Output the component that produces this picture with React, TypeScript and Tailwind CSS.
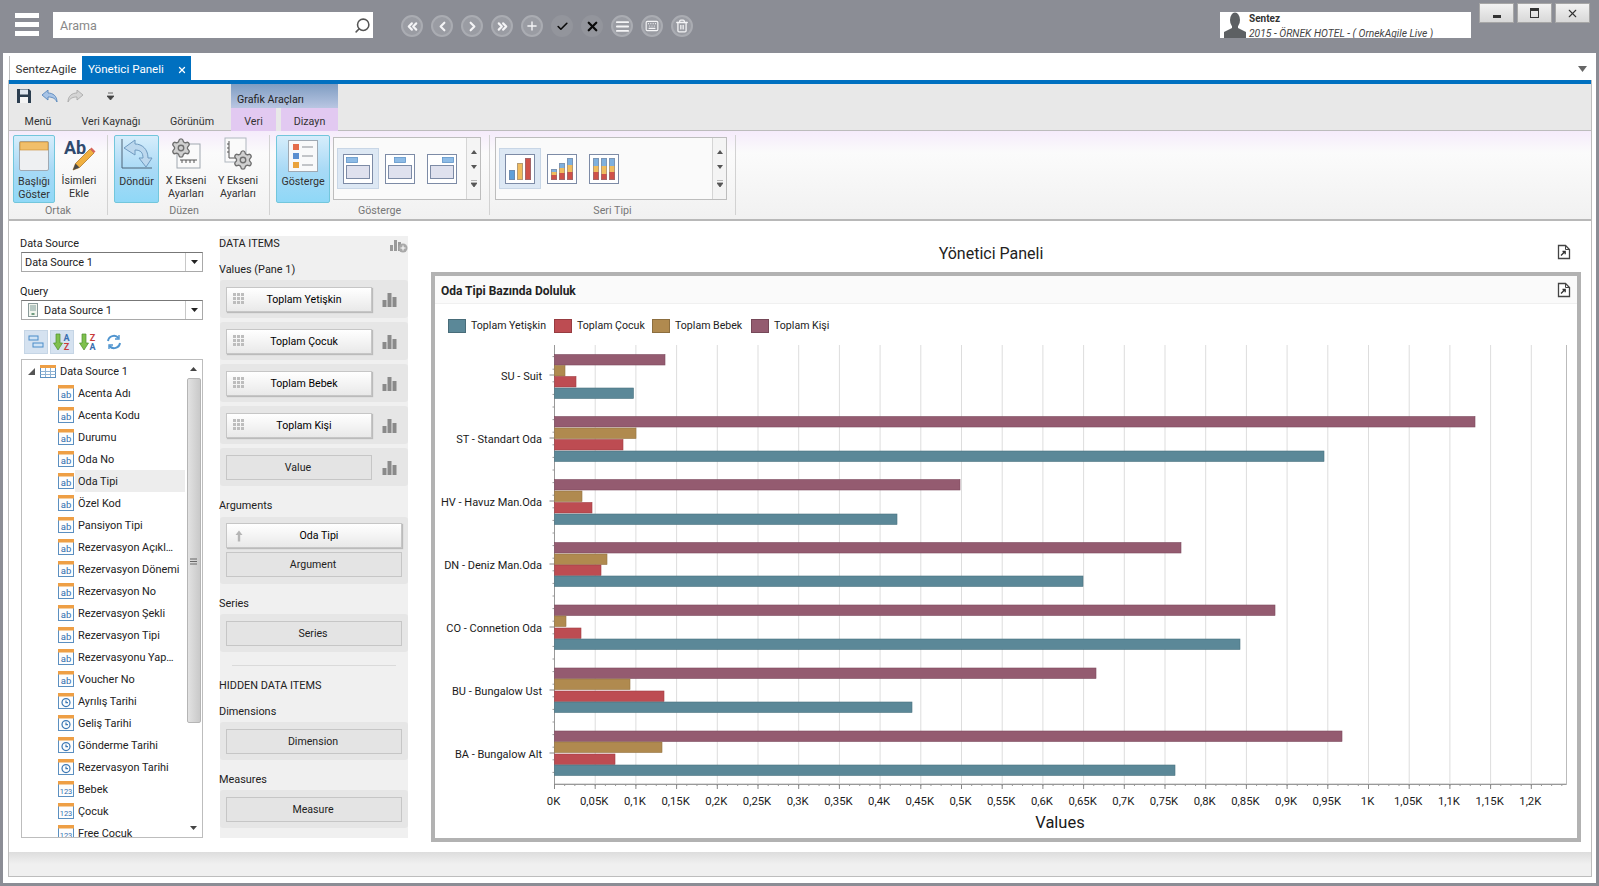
import React from "react";
import { ChevronsLeft, ChevronLeft, ChevronRight, ChevronsRight, Plus, Check, X, AlignJustify, Keyboard, Trash2, Search, Settings } from "lucide-react";

const FONT = 'Roboto, "Liberation Sans", Arial, sans-serif';

function AbIcon({ kind }: { kind: "ab" | "clock" | "num" }) {
  return (
    <svg width="16" height="16" viewBox="0 0 16 16" className="shrink-0">
      <rect x="0.5" y="0.5" width="15" height="15" fill="#fdfdfd" stroke="#5b8fc0" />
      <rect x="0" y="0" width="16" height="3.5" fill="#ee9f45" />
      {kind === "ab" && <text x="8" y="13" textAnchor="middle" fontSize="9.5" fill="#2f6db0" fontFamily={FONT}>ab</text>}
      {kind === "num" && <text x="8" y="13" textAnchor="middle" fontSize="7.5" fill="#2f6db0" fontFamily={FONT}>123</text>}
      {kind === "clock" && (
        <g fill="none" stroke="#3c78b4" strokeWidth="1.2">
          <circle cx="8" cy="9.6" r="4" />
          <path d="M8 7.5v2.2h2" />
        </g>
      )}
    </svg>
  );
}

function BarGlyph() {
  return (
    <svg width="15" height="15" viewBox="0 0 15 15" className="shrink-0">
      <rect x="0.5" y="8" width="4" height="7" fill="#8a8a8a" />
      <rect x="5.5" y="1" width="4" height="14" fill="#8a8a8a" />
      <rect x="10.5" y="5" width="4" height="10" fill="#8a8a8a" />
    </svg>
  );
}

function Grip() {
  return (
    <svg width="12" height="12" viewBox="0 0 12 12" className="shrink-0">
      {[0, 4, 8].map((y) => [0, 4, 8].map((x) => <rect key={`${x}${y}`} x={x} y={y} width="3" height="3" fill="#bdbdbd" />))}
    </svg>
  );
}

function DataButton({ label, filled, w, grip, arrow }: { label: string; filled?: boolean; w: string; grip?: boolean; arrow?: boolean }) {
  return (
    <div
      className={`${w} h-[25px] flex items-center shrink-0 border border-[#c6c6c6] text-[10.6px] ${filled ? "bg-gradient-to-b from-[#ffffff] to-[#e9e9e9] shadow-[1px_1px_1px_#bbbbbb] text-black" : "bg-[#e4e4e4] text-[#222222]"}`}
    >
      {grip && <span className="ml-[6px]"><Grip /></span>}
      {arrow && (
        <svg width="12" height="12" viewBox="0 0 12 12" className="ml-[6px] shrink-0">
          <path d="M6 0.5L9.5 5H7.2v6.5H4.8V5H2.5z" fill="#b5b5b5" />
        </svg>
      )}
      <span className={`flex-1 text-center pt-[1px] ${filled ? "pr-[8px]" : "pr-[2px]"}`}>{label}</span>
    </div>
  );
}

function ValueRow({ label, filled }: { label: string; filled?: boolean }) {
  return (
    <div className="h-[38px] bg-[#e6e6e6] rounded-[3px] flex items-center pl-[6px]">
      <DataButton label={label} filled={filled} grip={filled} w="w-[146px]" />
      <span className="ml-[10px]"><BarGlyph /></span>
    </div>
  );
}

function EmptySection({ label }: { label: string }) {
  return (
    <div className="h-[38px] mt-[4px] bg-[#e6e6e6] rounded-[3px] flex items-center px-[6px]">
      <DataButton label={label} w="w-[176px]" />
    </div>
  );
}

const TREE: [string, "ab" | "clock" | "num"][] = [
  ["Acenta Adı", "ab"], ["Acenta Kodu", "ab"], ["Durumu", "ab"], ["Oda No", "ab"], ["Oda Tipi", "ab"], ["Özel Kod", "ab"],
  ["Pansiyon Tipi", "ab"], ["Rezervasyon Açıkl…", "ab"], ["Rezervasyon Dönemi", "ab"], ["Rezervasyon No", "ab"],
  ["Rezervasyon Şekli", "ab"], ["Rezervasyon Tipi", "ab"], ["Rezervasyonu Yap…", "ab"], ["Voucher No", "ab"],
  ["Ayrılış Tarihi", "clock"], ["Geliş Tarihi", "clock"], ["Gönderme Tarihi", "clock"], ["Rezervasyon Tarihi", "clock"],
  ["Bebek", "num"], ["Çocuk", "num"], ["Free Çocuk", "num"],
];

function Combo({ text, icon }: { text: string; icon?: boolean }) {
  return (
    <div className="h-[20px] mt-[2px] border border-[#a9a9a9] border-t-[#777777] flex items-center bg-white">
      {icon && (
        <svg width="10" height="14" viewBox="0 0 10 14" className="ml-[6px] mr-[6px]">
          <rect x="0.5" y="0.5" width="9" height="13" fill="#f2f5ee" stroke="#8a9a9a" />
          <path d="M2 3h6M2 5h6M2 7h6" stroke="#7d9c98" />
          <rect x="3.5" y="10" width="3" height="2" fill="#6f9c80" />
        </svg>
      )}
      <span className={`flex-1 pt-[2px] ${icon ? "" : "pl-[3px]"}`}>{text}</span>
      <span className="w-[17px] h-full border-l border-[#c8c8c8] flex items-center justify-center">
        <svg width="7" height="4" viewBox="0 0 7 4"><path d="M0 0h7L3.5 4z" fill="#222222" /></svg>
      </span>
    </div>
  );
}

function SortIcon({ top, bottom }: { top: string; bottom: string }) {
  return (
    <svg width="18" height="18" viewBox="0 0 18 18">
      <path d="M3 1h4v9h2.5L5 17 0.5 10H3z" fill="#7fc04d" stroke="#4d8f2e" strokeWidth="0.7" />
      <text x="13.5" y="8" textAnchor="middle" fontSize="9" fontWeight="bold" fill={top === "A" ? "#3a6fb0" : "#c83a3a"} fontFamily={FONT}>{top}</text>
      <text x="13.5" y="17" textAnchor="middle" fontSize="9" fontWeight="bold" fill={bottom === "A" ? "#3a6fb0" : "#c83a3a"} fontFamily={FONT}>{bottom}</text>
    </svg>
  );
}

function LeftPanel() {
  return (
    <div className="w-[182px] ml-[12px] shrink-0 flex flex-col pt-[15px]">
      <div className="h-[14px] leading-[16px] -ml-[1px]">Data Source</div>
      <Combo text="Data Source 1" />
      <div className="h-[14px] leading-[16px] mt-[12px] -ml-[1px]">Query</div>
      <Combo text="Data Source 1" icon />
      <div className="h-[24px] mt-[10px] flex items-center pl-[3px]">
        <span className="w-[24px] h-[24px] bg-[#d5e2f0] border border-[#c5d5e5] flex items-center justify-center">
          <svg width="16" height="14" viewBox="0 0 16 14"><rect x="1" y="1" width="9" height="4" fill="#cfe3f5" stroke="#4a8cc8" /><rect x="5" y="8" width="10" height="4" fill="#cfe3f5" stroke="#4a8cc8" /></svg>
        </span>
        <span className="w-[24px] h-[24px] ml-[2px] bg-[#d5e2f0] border border-[#c5d5e5] flex items-center justify-center"><SortIcon top="A" bottom="Z" /></span>
        <span className="w-[24px] h-[24px] ml-[2px] flex items-center justify-center"><SortIcon top="Z" bottom="A" /></span>
        <span className="w-[24px] h-[24px] ml-[2px] flex items-center justify-center">
          <svg width="16" height="16" viewBox="0 0 16 16" fill="none" stroke="#4f94cf" strokeWidth="2"><path d="M2 7a6 6 0 0 1 10.5-3M14 9A6 6 0 0 1 3.5 12" /><path d="M13 1v4H9M3 15v-4h4" strokeWidth="1.4" /></svg>
        </span>
      </div>
      <div className="h-[479px] mt-[5px] border border-[#bdbdbd] flex overflow-hidden">
        <div className="flex-1 min-w-0 flex flex-col">
          <div className="h-[22px] shrink-0 flex items-center whitespace-nowrap">
            <svg width="7" height="7" viewBox="0 0 7 7" className="ml-[6px]"><path d="M7 0v7H0z" fill="#555555" /></svg>
            <svg width="16" height="13" viewBox="0 0 16 13" className="ml-[5px]">
              <rect x="0.5" y="0.5" width="15" height="12" fill="#fff" stroke="#5b8fc0" />
              <rect x="0" y="0" width="16" height="3" fill="#ee9f45" />
              <path d="M0.5 6.5h15M0.5 9.5h15M5.5 3v9M10.5 3v9" stroke="#8fb3d4" />
            </svg>
            <span className="ml-[4px] pt-[2px]">Data Source 1</span>
          </div>
          {TREE.map(([t, k]) => (
            <div key={t} className="h-[22px] shrink-0 flex items-center pl-[36px] whitespace-nowrap">
              <AbIcon kind={k} />
              <span className={`ml-[1px] pl-[3px] pt-[2px] flex-1 h-full flex items-center ${t === "Oda Tipi" ? "bg-[#ededed]" : ""}`}>{t}</span>
            </div>
          ))}
        </div>
        <div className="w-[17px] shrink-0 flex flex-col items-center bg-white">
          <svg width="7" height="4" viewBox="0 0 7 4" className="mt-[7px] mb-[7px]"><path d="M3.5 0L7 4H0z" fill="#444444" /></svg>
          <div className="w-[14px] h-[345px] bg-gradient-to-r from-[#e2e2e2] to-[#c9c9c9] border border-[#b5b5b5] rounded-[2px] flex items-center justify-center pt-[22px]">
            <svg width="7" height="7" viewBox="0 0 7 7"><path d="M0 1h7M0 3.5h7M0 6h7" stroke="#666666" /></svg>
          </div>
          <div className="flex-1" />
          <svg width="7" height="4" viewBox="0 0 7 4" className="mb-[7px]"><path d="M0 0h7L3.5 4z" fill="#444444" /></svg>
        </div>
      </div>
    </div>
  );
}

function SectionLabel({ children }: { children: React.ReactNode }) {
  return <div className="h-[14px] leading-[16px] mt-[12px] -ml-[1px]">{children}</div>;
}

function MiddlePanel() {
  return (
    <div className="w-[188px] ml-[17px] mt-[15px] h-[602px] shrink-0 bg-[#f0f0f0] flex flex-col">
      <div className="h-[14px] leading-[16px] mt-0 flex justify-between">
        <span className="-ml-[1px]">DATA ITEMS</span>
        <svg width="18" height="14" viewBox="0 0 18 14" className="mt-[3px]">
          <rect x="0" y="6" width="3" height="6" fill="#9a9a9a" /><rect x="4" y="1" width="3" height="11" fill="#9a9a9a" /><rect x="8" y="3" width="3" height="9" fill="#9a9a9a" />
          <circle cx="13" cy="9" r="4.5" fill="#a8a8a8" /><path d="M13 6.5v5M10.5 9h5" stroke="#fff" />
        </svg>
      </div>
      <SectionLabel>Values (Pane 1)</SectionLabel>
      <div className="mt-[4px] flex flex-col gap-[4px]">
        <ValueRow label="Toplam Yetişkin" filled />
        <ValueRow label="Toplam Çocuk" filled />
        <ValueRow label="Toplam Bebek" filled />
        <ValueRow label="Toplam Kişi" filled />
        <ValueRow label="Value" />
      </div>
      <SectionLabel>Arguments</SectionLabel>
      <div className="h-[67px] mt-[5px] bg-[#e6e6e6] rounded-[3px] flex flex-col gap-[4px] px-[6px] pt-[6px]">
        <DataButton label="Oda Tipi" filled arrow w="w-[176px]" />
        <DataButton label="Argument" w="w-[176px]" />
      </div>
      <SectionLabel>Series</SectionLabel>
      <EmptySection label="Series" />
      <div className="h-px mt-[13px] mx-[12px] bg-[#dadada]" />
      <SectionLabel>HIDDEN DATA ITEMS</SectionLabel>
      <SectionLabel>Dimensions</SectionLabel>
      <EmptySection label="Dimension" />
      <SectionLabel>Measures</SectionLabel>
      <EmptySection label="Measure" />
    </div>
  );
}

function ExportIcon() {
  return (
    <svg width="16" height="16" viewBox="0 0 16 16" fill="none" className="shrink-0">
      <path d="M2.5 1.5h7l4 4v9h-11z" fill="#fff" stroke="#444444" strokeWidth="1.3" />
      <path d="M9.5 1.5v4h4" stroke="#444444" />
      <path d="M5 11.5l4-4M6.5 7.5H9.2v2.7" stroke="#333333" strokeWidth="1.3" />
    </svg>
  );
}

type Cat = { n: string; y: number; p: number; t: number; r: number; b: number; ys: number[] };
const CATS: Cat[] = [
  { n: "SU - Suit", y: 376, p: 665, t: 565, r: 576, b: 633.5, ys: [355.5, 366.5, 377.5, 389] },
  { n: "ST - Standart Oda", y: 439, p: 1475, t: 636, r: 623, b: 1324, ys: [417.5, 429, 440.5, 452] },
  { n: "HV - Havuz Man.Oda", y: 502, p: 960, t: 582, r: 592, b: 897, ys: [480.5, 492, 503.5, 515] },
  { n: "DN - Deniz Man.Oda", y: 565, p: 1181, t: 607, r: 601, b: 1083, ys: [543.5, 555, 566, 577] },
  { n: "CO - Connetion Oda", y: 628, p: 1275, t: 566, r: 581, b: 1240, ys: [606, 617, 629, 640] },
  { n: "BU - Bungalow Ust", y: 691, p: 1096, t: 630, r: 664, b: 912, ys: [669, 680, 692, 703] },
  { n: "BA - Bungalow Alt", y: 754, p: 1342, t: 662, r: 615, b: 1175, ys: [732, 743, 755, 766] },
];
const COL = { p: "#945b70", t: "#b08a4f", r: "#bd4c52", b: "#5b8898" };
const LEG: [string, string, string][] = [
  ["Toplam Yetişkin", COL.b, "w-[106px]"],
  ["Toplam Çocuk", COL.r, "w-[98px]"],
  ["Toplam Bebek", COL.t, "w-[99px]"],
  ["Toplam Kişi", COL.p, "w-[90px]"],
];
const X0 = 554.5;
const STEP = 40.7;
const TL = ["0K","0,05K","0,1K","0,15K","0,2K","0,25K","0,3K","0,35K","0,4K","0,45K","0,5K","0,55K","0,6K","0,65K","0,7K","0,75K","0,8K","0,85K","0,9K","0,95K","1K","1,05K","1,1K","1,15K","1,2K"];

function Plot() {
  const fs = { fontFamily: FONT, fill: "#1a1a1a" } as const;
  const yticks: number[] = [];
  for (let y = 345; y < 785; y += 12.6) yticks.push(y);
  const xticks: number[] = [];
  for (let x = X0; x < 1566; x += STEP / 4) xticks.push(x);
  return (
    <svg width="1142" height="493" viewBox="435 346 1142 493" className="block">
      <rect x={X0} y={345.5} width={1566.5 - X0} height={439.5} fill="#fff" stroke="#bbbbbb" />
      {TL.map((_, i) => i > 0 && <line key={i} x1={X0 + i * STEP} x2={X0 + i * STEP} y1={346} y2={785} stroke="#dddddd" />)}
      <line x1={X0} x2={X0} y1={345} y2={785} stroke="#999999" />
      <line x1={X0} x2={1566.5} y1={785.5} y2={785.5} stroke="#999999" />
      {yticks.map((y) => <line key={y} x1={X0 - 2} x2={X0} y1={y} y2={y} stroke="#999999" />)}
      {xticks.map((x) => <line key={x} x1={x} x2={x} y1={785} y2={787} stroke="#999999" />)}
      {TL.map((l, i) => (
        <g key={l}>
          <line x1={X0 + i * STEP} x2={X0 + i * STEP} y1={785} y2={790} stroke="#888888" />
          <text x={X0 + i * STEP - 1} y={806} textAnchor="middle" fontSize="11.3" {...fs}>{l}</text>
        </g>
      ))}
      {CATS.map((c) => (
        <g key={c.n}>
          <line x1={X0 - 5} x2={X0} y1={c.y} y2={c.y} stroke="#888888" />
          <text x={542} y={c.y + 5} textAnchor="end" fontSize="11" {...fs}>{c.n}</text>
          <rect x={X0} y={c.ys[0]} width={c.p - X0} height={10.5} fill={COL.p} stroke="#7d4c5f" strokeWidth="0.6" />
          <rect x={X0} y={c.ys[1]} width={c.t - X0} height={10.5} fill={COL.t} stroke="#957441" strokeWidth="0.6" />
          <rect x={X0} y={c.ys[2]} width={c.r - X0} height={10.5} fill={COL.r} stroke="#a03f45" strokeWidth="0.6" />
          <rect x={X0} y={c.ys[3]} width={c.b - X0} height={10.5} fill={COL.b} stroke="#4c7381" strokeWidth="0.6" />
        </g>
      ))}
      <text x={1060} y={829} textAnchor="middle" fontFamily={FONT} fontSize="16.5" fill="#1a1a1a">Values</text>
    </svg>
  );
}

function RightPanel() {
  return (
    <div className="w-[1150px] ml-[23px] shrink-0 flex flex-col">
      <div className="h-[51px] flex items-center pt-[11px] text-[16px]">
        <div className="w-[1120px] text-center text-[#222222] pt-[4px]">Yönetici Paneli</div>
        <span className="ml-[5px]"><ExportIcon /></span>
      </div>
      <div className="h-[570px] border-[4px] border-[#b2b2b2] flex flex-col bg-white">
        <div className="h-[28px] shrink-0 bg-[#fafafa] border-b border-[#f0f0f0] flex items-center pl-[6px] pr-[5px] justify-between">
          <span className="font-bold text-[12px] text-[#222222] pt-[2px]">Oda Tipi Bazında Doluluk</span>
          <ExportIcon />
        </div>
        <div className="h-[41px] shrink-0 flex items-center pl-[13px] pt-[3px] text-[10.6px]">
          {LEG.map(([l, c, w]) => (
            <div key={l} className={`${w} flex items-center shrink-0`}>
              <span className="w-[18px] h-[14px] border border-black/20 shrink-0" style={{ background: c }} />
              <span className="ml-[5px] whitespace-nowrap">{l}</span>
            </div>
          ))}
        </div>
        <Plot />
      </div>
    </div>
  );
}

function NavBtn({ children, dark }: { children: React.ReactNode; dark?: boolean }) {
  return (
    <span className={`w-[22px] h-[22px] rounded-full flex items-center justify-center ${dark ? "bg-[#93959c] text-[#0a0a0a]" : "bg-[#9a9ca3] border-2 border-[#aaacb2] text-[#f4f4f6]"}`}>
      {children}
    </span>
  );
}

function TopBar() {
  const s = { size: 15, strokeWidth: 3.4 };
  return (
    <div className="h-[53px] shrink-0 flex items-start pl-[15px]">
      <div className="w-[24px] mt-[13px] flex flex-col gap-[4px]">
        <div className="h-[5px] bg-white" /><div className="h-[5px] bg-white" /><div className="h-[5px] bg-white" />
      </div>
      <div className="w-[320px] h-[26px] mt-[12px] ml-[14px] bg-white flex items-center justify-between pl-[7px] pr-[2px] text-[12.5px] text-[#888888]">
        <span className="pt-[3px]">Arama</span>
        <Search size={17} strokeWidth={2.2} className="-scale-x-100 text-[#555555]" />
      </div>
      <div className="flex gap-[8px] ml-[28px] mt-[15px]">
        <NavBtn><ChevronsLeft {...s} /></NavBtn>
        <NavBtn><ChevronLeft {...s} /></NavBtn>
        <NavBtn><ChevronRight {...s} /></NavBtn>
        <NavBtn><ChevronsRight {...s} /></NavBtn>
        <NavBtn><Plus size={14} strokeWidth={2.4} /></NavBtn>
        <NavBtn dark><Check size={13} strokeWidth={3} /></NavBtn>
        <NavBtn dark><X size={15} strokeWidth={3.6} /></NavBtn>
        <NavBtn><AlignJustify size={15} strokeWidth={3} /></NavBtn>
        <NavBtn><Keyboard size={14} strokeWidth={2} /></NavBtn>
        <NavBtn><Trash2 size={14} strokeWidth={2.2} /></NavBtn>
      </div>
      <div className="w-[251px] h-[26px] mt-[12px] ml-[527px] bg-white flex overflow-hidden">
        <svg width="24" height="26" viewBox="0 0 24 26" className="ml-[3px] shrink-0">
          <ellipse cx="12" cy="8" rx="5" ry="7.5" fill="#5d6063" />
          <path d="M9 13h6v3l8 4v6H1v-6l8-4z" fill="#5d6063" />
        </svg>
        <div className="ml-[2px] flex flex-col">
          <span className="font-bold text-[10px] leading-[12px] mt-[1px] text-[#333333]">Sentez</span>
          <span className="italic text-[10.3px] leading-[10px] mt-[3.5px] text-[#444444] whitespace-nowrap">2015 - ÖRNEK HOTEL - ( OrnekAgile  Live )</span>
        </div>
      </div>
      <div className="flex gap-[3px] ml-[8px] mt-[3px]">
        {[
          <div key="a" className="w-[8px] h-[3px] bg-[#333333] mt-[6px]" />,
          <div key="b" className="w-[9px] h-[10px] border border-[#333333] border-t-[3px]" />,
          <X key="c" size={13} strokeWidth={2} className="text-[#333333]" />,
        ].map((g, i) => (
          <div key={i} className="w-[35px] h-[20px] bg-gradient-to-b from-[#f2f2f2] to-[#d8d8d8] border border-[#a6a6a6] flex items-center justify-center">{g}</div>
        ))}
      </div>
    </div>
  );
}

function TabRow() {
  return (
    <div className="h-[27px] shrink-0 flex items-end pl-[6px] pr-[9px] text-[11.6px]">
      <div className="w-[73px] h-[24px] flex items-center justify-center border-l border-[#c0c0c0] text-[#333333] pt-[3px]">SentezAgile</div>
      <div className="w-[109px] h-[24px] bg-[#0070c0] text-white flex items-center pl-[6px] pt-[3px]">
        Yönetici Paneli
        <X size={10} strokeWidth={3} className="ml-[13px]" />
      </div>
      <div className="flex-1" />
      <svg width="9" height="6" viewBox="0 0 9 6" className="mb-[8px]"><path d="M0 0h9L4.5 6z" fill="#666666" /></svg>
    </div>
  );
}

function WindowIcon() {
  return (
    <svg width="30" height="30" viewBox="0 0 30 30">
      <rect x="0.5" y="0.5" width="29" height="29" rx="1.5" fill="#eef0f2" stroke="#9fa9b3" />
      <rect x="1" y="1" width="28" height="8" fill="#f1bf6a" stroke="#c88a2c" strokeWidth="0.6" />
    </svg>
  );
}

function AbPencil() {
  return (
    <svg width="34" height="34" viewBox="0 0 34 34">
      <text x="2" y="17" fontSize="18" fontWeight="bold" fill="#2f4a6e" fontFamily={FONT}>Ab</text>
      <path d="M11 33l2.5-6.5L28 12l4 4-14.5 14.5z" fill="#f0b040" stroke="#a86f20" strokeWidth="0.7" />
      <path d="M28 12l1.5-1.5 4 4L32 16z" fill="#d9645a" />
      <path d="M11 33l2.5-6.5 4 4z" fill="#4a4a4a" />
    </svg>
  );
}

function RotateIcon() {
  return (
    <svg width="32" height="32" viewBox="0 0 32 32">
      <path d="M1 1v29h30" fill="none" stroke="#4f6478" />
      <path d="M14 2L3 10l11 7v-5c6 0 8 3 8 8h-4l7 9 6-9h-4c0-9-6-14-13-14z" fill="#bcd8ee" stroke="#6f9ac0" />
    </svg>
  );
}

function GearX({ y }: { y?: boolean }) {
  return (
    <div className="relative w-[32px] h-[34px]">
      <svg width="32" height="34" viewBox="0 0 32 34">
        {y ? (
          <g><rect x="3" y="1" width="21" height="24" fill="#fafafa" stroke="#b0b7bf" /><path d="M7 4v17h15M5 7h2M5 11h2M5 15h2" fill="none" stroke="#555555" /></g>
        ) : (
          <g><rect x="7" y="7" width="23" height="24" fill="#fafafa" stroke="#9fa7af" /><path d="M10 23h17M12 23v3M16 23v3M20 23v3M24 23v3" fill="none" stroke="#555555" /></g>
        )}
      </svg>
      <Settings size={22} strokeWidth={1.5} fill="#d0d0d0" className={`absolute text-[#6f6f6f] ${y ? "right-0 bottom-0" : "left-0 top-0"}`} />
    </div>
  );
}

function LegendIcon() {
  return (
    <svg width="30" height="32" viewBox="0 0 30 32">
      <rect x="0.5" y="0.5" width="29" height="31" fill="#f8f9fa" stroke="#9fa9b3" />
      <rect x="5" y="4" width="6" height="6" fill="#e46c4a" />
      <rect x="5" y="13" width="6" height="6" fill="#5b8fd0" />
      <rect x="5" y="22" width="6" height="6" fill="#eaa33c" />
      <path d="M14 7h11M14 16h11M14 25h11" stroke="#8a8f96" />
    </svg>
  );
}

function LayoutIcon({ x }: { x: number }) {
  return (
    <svg width="30" height="30" viewBox="0 0 30 30">
      <rect x="0.5" y="0.5" width="29" height="29" fill="#ffffff" stroke="#7d8ba6" />
      <rect x="3.5" y="11.5" width="23" height="13" fill="#dfe1ee" stroke="#7d8ba6" />
      <rect x={x + 0.5} y="3.5" width="11" height="5" fill="#8dbbe6" stroke="#5f93c8" strokeWidth="0.8" />
    </svg>
  );
}

function Bar({ x, segs }: { x: number; segs: [number, number, string][] }) {
  return (
    <g>
      {segs.map(([y, h, c], i) => <rect key={i} x={x} y={y} width="6" height={h} fill={c} />)}
      <rect x={x + 0.5} y={segs[0][0] + 0.5} width="5" height={segs.reduce((a, s) => a + s[1], 0) - 1} fill="none" stroke="#7a7a8a" strokeOpacity="0.5" />
    </g>
  );
}

function BarsIcon({ kind }: { kind: number }) {
  const R = "#cf5148", O = "#f0bc5e", B = "#7fb0de";
  return (
    <svg width="30" height="30" viewBox="0 0 30 30">
      <rect x="0.5" y="0.5" width="29" height="29" fill="#ffffff" stroke="#7d8ba6" />
      {kind === 0 && (
        <g>
          <Bar x={4} segs={[[16, 10, "#5f9fd8"]]} />
          <Bar x={12} segs={[[9, 17, O]]} />
          <Bar x={20} segs={[[4, 22, R]]} />
        </g>
      )}
      {kind === 1 && (
        <g>
          <Bar x={4} segs={[[15, 3, B], [18, 3, O], [21, 5, R]]} />
          <Bar x={12} segs={[[9, 5, B], [14, 5, O], [19, 7, R]]} />
          <Bar x={20} segs={[[4, 7, B], [11, 7, O], [18, 8, R]]} />
        </g>
      )}
      {kind === 2 && (
        <g>
          {[4, 12, 20].map((x, i) => (
            <Bar key={x} x={x} segs={[[4, 8, B], [12, i === 1 ? 8 : 6, O], [i === 1 ? 20 : 18, i === 1 ? 6 : 8, R]]} />
          ))}
        </g>
      )}
    </svg>
  );
}

function RibbonBtn({ w, active, icon, lines, iconTop = 5 }: { w: string; active?: boolean; icon: React.ReactNode; lines: string[]; iconTop?: number }) {
  return (
    <div className={`${w} h-[68px] shrink-0 flex flex-col items-center ${active ? "bg-gradient-to-b from-[#d6edfb] via-[#a9daf6] to-[#8fd8f7] border border-[#72c6dc] rounded-[2px]" : ""}`}>
      <div className="h-[39px] flex items-start justify-center" style={{ paddingTop: iconTop }}>{icon}</div>
      <div className="text-center leading-[13px] whitespace-nowrap text-[#333333]">
        {lines.map((l) => <div key={l}>{l}</div>)}
      </div>
    </div>
  );
}

function Scroller() {
  return (
    <div className="w-[14px] h-full shrink-0 border-l border-[#d5d5d5] bg-[#f4f4f4] flex flex-col items-center justify-around py-[6px]">
      <svg width="6" height="4" viewBox="0 0 6 4"><path d="M3 0l3 4H0z" fill="#555555" /></svg>
      <svg width="6" height="4" viewBox="0 0 6 4"><path d="M0 0h6L3 4z" fill="#555555" /></svg>
      <svg width="6" height="7" viewBox="0 0 6 7"><path d="M0 0h6M0 3h6L3 7z" stroke="#555555" strokeWidth="0.8" fill="#555555" /></svg>
    </div>
  );
}

function Group({ w, label, children, labelPad }: { w: string; label: string; children: React.ReactNode; labelPad?: string }) {
  return (
    <div className={`${w} h-[80px] shrink-0 border-r border-[#d2d2d2] flex flex-col`}>
      <div className="h-[68px] flex items-start">{children}</div>
      <div className={`h-[12px] pt-[1px] text-center leading-[13px] text-[#777777] ${labelPad ?? ""}`}>{label}</div>
    </div>
  );
}

function Ribbon() {
  return (
    <div className="shrink-0 flex flex-col text-[10.7px]">
      <div className="h-[4px] shrink-0 bg-[#0070c0]" />
      <div className="h-[47px] shrink-0 bg-[#e8e8e8] border-b border-[#bcbcbc] flex">
        <div className="w-[222px] shrink-0 flex flex-col">
          <div className="h-[24px] flex items-center pl-[7px]">
            <svg width="16" height="16" viewBox="0 0 16 16"><path d="M1 1h12l2 2v12H1z" fill="#2c3e50" /><rect x="4" y="1.5" width="8" height="5" fill="#dfe6ee" /><rect x="4" y="9" width="8" height="6" fill="#f5f5f5" /></svg>
            <svg width="16" height="12" viewBox="0 0 16 12" className="ml-[10px]"><path d="M6 0L0 5l6 5V7c4 0 7 1 9 5 0-6-4-9-9-9z" fill="#a8c4e6" stroke="#4d7fb8" strokeWidth="0.8" /></svg>
            <svg width="16" height="12" viewBox="0 0 16 12" className="ml-[9px]"><path d="M10 0l6 5-6 5V7c-4 0-7 1-9 5 0-6 4-9 9-9z" fill="#d5d5d5" stroke="#a5a5a5" strokeWidth="0.8" /></svg>
            <svg width="7" height="8" viewBox="0 0 7 8" className="ml-[24px]"><path d="M1 1h5M0 4h7L3.5 8z" stroke="#444444" fill="#444444" strokeWidth="0.8" /></svg>
          </div>
          <div className="h-[23px] flex items-center text-[#333333] pt-[7px]">
            <span className="w-[58px] text-center">Menü</span>
            <span className="w-[88px] text-center">Veri Kaynağı</span>
            <span className="w-[74px] text-center">Görünüm</span>
          </div>
        </div>
        <div className="w-[107px] ml-[0px] shrink-0 flex flex-col">
          <div className="h-[24px] bg-gradient-to-b from-[#7f9dc2] to-[#b9c6e2] flex items-center pl-[6px] pt-[9px] text-[#222222]">Grafik Araçları</div>
          <div className="h-[23px] flex bg-[#e8e8e8] text-[#333333]">
            <span className="w-[45px] bg-[#e2c9f1] text-center leading-[27px]">Veri</span>
            <span className="w-[57px] ml-[5px] bg-[#e2c9f1] text-center leading-[27px]">Dizayn</span>
          </div>
        </div>
      </div>
      <div className="h-[90px] shrink-0 pt-[4px] border-b-2 border-[#b8b8b8] bg-gradient-to-b from-[#f5ebfb] via-[#fbfbfb] via-[25%] to-[#f1f1f1] flex">
        <Group w="w-[99px]" label="Ortak">
          <div className="w-[4px]" />
          <RibbonBtn w="w-[42px]" active icon={<WindowIcon />} lines={["Başlığı", "Göster"]} />
          <div className="w-[2px]" />
          <RibbonBtn w="w-[44px]" icon={<AbPencil />} lines={["İsimleri", "Ekle"]} iconTop={2} />
        </Group>
        <Group w="w-[162px]" label="Düzen" labelPad="pr-[9px]">
          <div className="w-[6px]" />
          <RibbonBtn w="w-[45px]" active icon={<RotateIcon />} lines={["Döndür"]} iconTop={2} />
          <div className="w-[2px]" />
          <RibbonBtn w="w-[50px]" icon={<GearX />} lines={["X Ekseni", "Ayarları"]} iconTop={2} />
          <div className="w-[2px]" />
          <RibbonBtn w="w-[50px]" icon={<GearX y />} lines={["Y Ekseni", "Ayarları"]} iconTop={2} />
        </Group>
        <Group w="w-[220px]" label="Gösterge">
          <div className="w-[6px]" />
          <RibbonBtn w="w-[54px]" active icon={<LegendIcon />} lines={["Gösterge"]} iconTop={4} />
          <div className="w-[3px]" />
          <div className="w-[148px] h-[63px] mt-[2px] border border-[#bdbdbd] bg-[#fafafa] flex items-center">
            <div className="w-[42px] h-[41px] ml-[3px] bg-[#dde8f4] border border-[#c8d6e6] flex items-center justify-center shrink-0"><LayoutIcon x={3} /></div>
            <div className="ml-[6px] shrink-0"><LayoutIcon x={9} /></div>
            <div className="ml-[12px] shrink-0"><LayoutIcon x={15} /></div>
            <div className="flex-1" />
            <Scroller />
          </div>
        </Group>
        <Group w="w-[246px]" label="Seri Tipi">
          <div className="w-[5px]" />
          <div className="w-[232px] h-[63px] mt-[2px] border border-[#bdbdbd] bg-[#fafafa] flex items-center">
            <div className="w-[42px] h-[41px] ml-[3px] bg-[#dde8f4] border border-[#c8d6e6] flex items-center justify-center shrink-0"><BarsIcon kind={0} /></div>
            <div className="ml-[6px] shrink-0"><BarsIcon kind={1} /></div>
            <div className="ml-[12px] shrink-0"><BarsIcon kind={2} /></div>
            <div className="flex-1" />
            <Scroller />
          </div>
        </Group>
      </div>
    </div>
  );
}

export default function App() {
  return (
    <div className="w-[1599px] h-[886px] bg-[#8b8d95] flex flex-col overflow-hidden text-[10.9px] text-[#222222]" style={{ fontFamily: FONT }}>
      <TopBar />
      <div className="flex-1 min-h-0 mx-[3px] mb-[3px] bg-white flex flex-col">
        <TabRow />
        <div className="flex-1 min-h-0 ml-[5px] mr-[4px] mb-[6px] border-l border-r border-b border-[#bdbdbd] flex flex-col">
          <Ribbon />
          <div className="h-[631px] shrink-0 flex items-start overflow-hidden">
            <LeftPanel />
            <MiddlePanel />
            <RightPanel />
          </div>
          <div className="flex-1 min-h-0 bg-gradient-to-b from-[#dddddd] via-[#f0f0f0] to-[#f0f0f0]" />
        </div>
      </div>
    </div>
  );
}
